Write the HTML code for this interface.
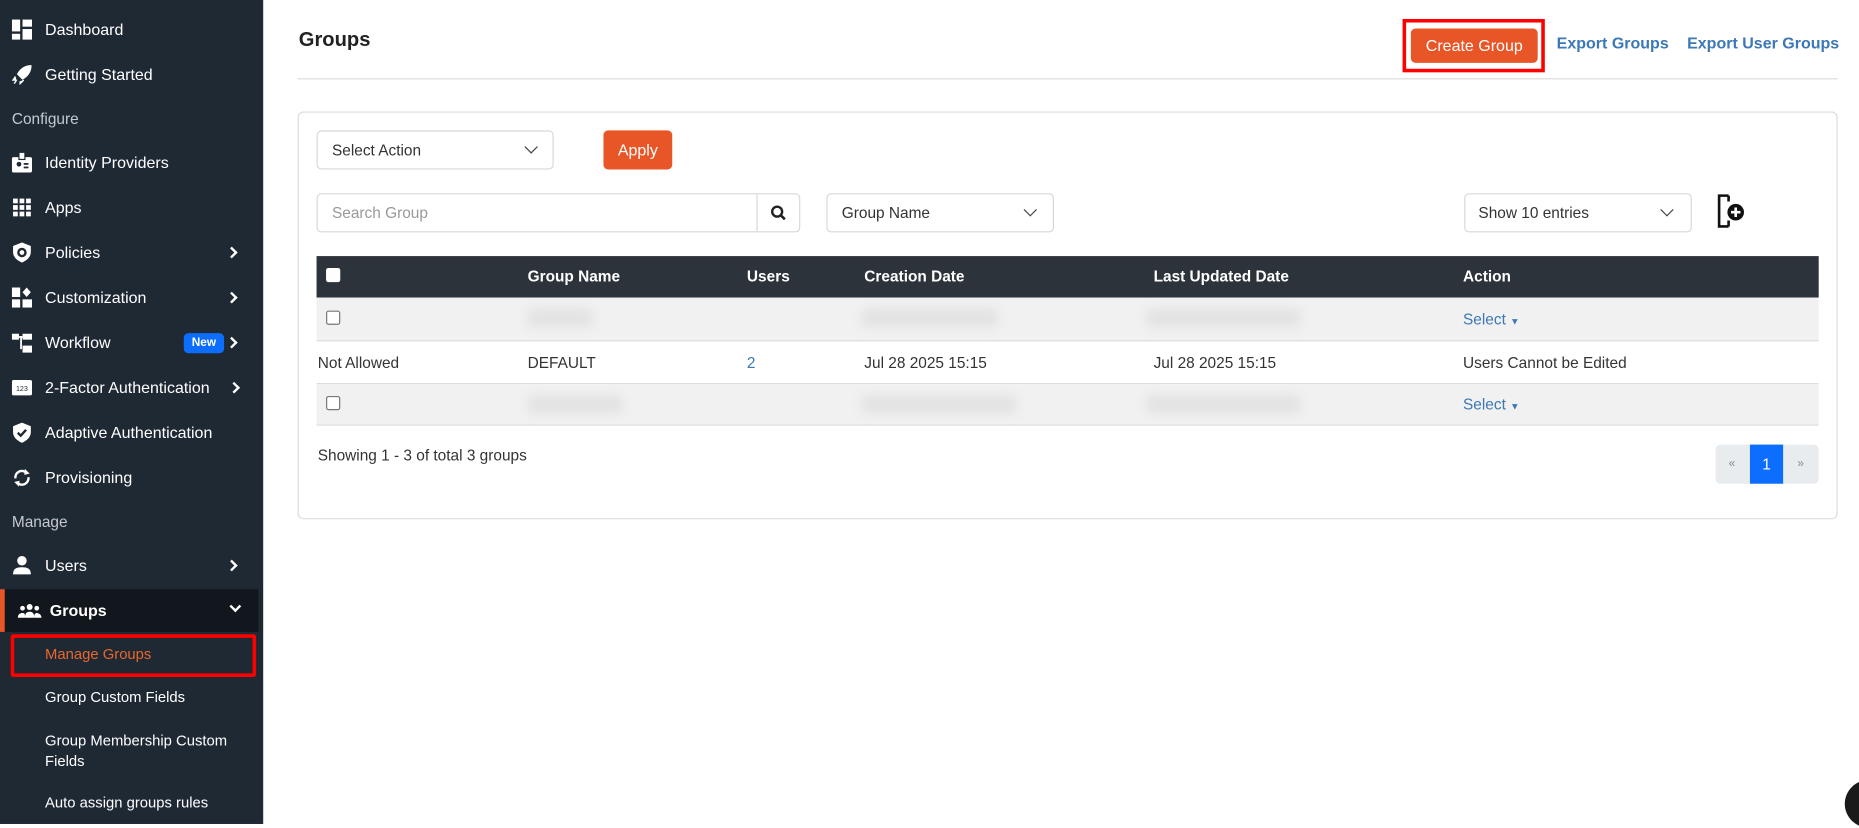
<!DOCTYPE html>
<html><head><meta charset="utf-8"><style>
*{box-sizing:border-box;margin:0;padding:0}
html,body{width:1859px;height:824px;overflow:hidden;background:#fff;font-family:"Liberation Sans",sans-serif}
#w{position:absolute;left:0;top:0;width:1568px;height:695px;transform:scale(1.18559);transform-origin:0 0}
.a{position:absolute;white-space:nowrap}
#sb{position:absolute;left:0;top:0;width:222px;height:695px;background:#1f2934}
.it{position:absolute;left:38px;color:#fff;font-size:13.5px;transform:translateY(-50%)}
.ic{position:absolute;left:10px;width:17px;height:17px;transform:translateY(-50%)}
.sec{position:absolute;left:10px;color:#c4c9cf;font-size:13px;transform:translateY(-50%)}
.chev{position:absolute;left:192px;width:7px;height:7px;border-right:2px solid #fff;border-top:2px solid #fff;transform:translateY(-50%) rotate(45deg)}
.sub{position:absolute;left:38px;color:#fff;font-size:12.5px}
.box{position:absolute;border:1px solid #d5d8dc;border-radius:4px;background:#fff;font-size:13px;color:#333}
.btn{position:absolute;background:#e85628;color:#fff;border-radius:4px;font-size:13.5px;text-align:center}
.th{position:absolute;top:233px;color:#fff;font-weight:bold;font-size:13px;transform:translateY(-50%)}
.td{position:absolute;font-size:13px;color:#333;transform:translateY(-50%)}
.bl{position:absolute;background:#e3e3e3;filter:blur(4px);border-radius:4px;height:16px}
.cb{position:absolute;left:275px;width:12px;height:12px;border:1px solid #777;border-radius:2px;background:#fff}
.sel{position:absolute;left:1234px;color:#3b78b5;font-size:13px;transform:translateY(-50%)}
.dn{position:absolute;width:8px;height:8px;border-right:1.5px solid #444;border-bottom:1.5px solid #444;transform:rotate(45deg)}
</style></head><body><div id="w">
<div id="sb">
<svg class="ic" style="top:25px" viewBox="0 0 17 17"><rect x="0" y="0" width="7" height="10" fill="#fff"/><rect x="9" y="0" width="8" height="6" fill="#fff"/><rect x="0" y="12" width="7" height="5" fill="#fff"/><rect x="9" y="8" width="8" height="9" fill="#fff"/></svg>
<div class="it" style="top:25px">Dashboard</div>
<svg class="ic" style="top:63px" viewBox="0 0 17 17"><path d="M16 1C11 1 7 4 5 8L9 12C13 10 16 6 16 1Z M3 10L1 13 4 13 M7 14L7 16 10 13 M4 13L2 16" fill="#fff" stroke="#fff" stroke-width="1.2"/></svg>
<div class="it" style="top:63px">Getting Started</div>
<div class="sec" style="top:100px">Configure</div>
<svg class="ic" style="top:137px" viewBox="0 0 17 17"><rect x="0" y="4" width="17" height="13" rx="1.5" fill="#fff"/><rect x="6" y="0" width="5" height="6" fill="#fff" stroke="#1f2934"/><circle cx="6" cy="10" r="2" fill="#1f2934"/><rect x="10" y="9" width="4" height="1.5" fill="#1f2934"/><rect x="10" y="12" width="4" height="1.5" fill="#1f2934"/></svg>
<div class="it" style="top:137px">Identity Providers</div>
<svg class="ic" style="top:175px" viewBox="0 0 17 17" fill="#fff"><rect x="1" y="1" width="4" height="4"/><rect x="6.5" y="1" width="4" height="4"/><rect x="12" y="1" width="4" height="4"/><rect x="1" y="6.5" width="4" height="4"/><rect x="6.5" y="6.5" width="4" height="4"/><rect x="12" y="6.5" width="4" height="4"/><rect x="1" y="12" width="4" height="4"/><rect x="6.5" y="12" width="4" height="4"/><rect x="12" y="12" width="4" height="4"/></svg>
<div class="it" style="top:175px">Apps</div>
<svg class="ic" style="top:213px" viewBox="0 0 17 17"><path d="M8.5 0L16 3V8C16 12 13 15 8.5 17C4 15 1 12 1 8V3Z" fill="#fff"/><circle cx="8.5" cy="8.5" r="3" fill="none" stroke="#1f2934" stroke-width="2"/></svg>
<div class="it" style="top:213px">Policies</div><div class="chev" style="top:213px"></div>
<svg class="ic" style="top:251px" viewBox="0 0 17 17" fill="#fff"><rect x="0" y="0" width="7" height="8"/><rect x="0" y="10" width="7" height="7"/><rect x="9" y="10" width="8" height="7"/><path d="M12.5 0L16 4 12.5 8 9 4Z"/></svg>
<div class="it" style="top:251px">Customization</div><div class="chev" style="top:251px"></div>
<svg class="ic" style="top:289px" viewBox="0 0 17 17" fill="#fff"><rect x="0" y="1" width="6" height="5"/><rect x="9" y="1" width="8" height="5"/><rect x="9" y="11" width="8" height="6"/><rect x="6" y="3" width="3" height="1.5"/><rect x="7" y="3" width="1.5" height="11"/></svg>
<div class="it" style="top:289px">Workflow</div>
<div class="a" style="left:155px;top:281px;width:34px;height:17px;background:#0d6efd;border-radius:4px;color:#fff;font-size:10px;font-weight:bold;text-align:center;line-height:17px">New</div>
<div class="chev" style="top:289px"></div>
<svg class="ic" style="top:327px" viewBox="0 0 17 17"><rect x="0" y="2" width="17" height="13" rx="1.5" fill="#fff"/><text x="8.5" y="11.5" font-size="6" text-anchor="middle" fill="#1f2934" font-family="Liberation Sans">123</text></svg>
<div class="it" style="top:327px">2-Factor Authentication</div><div class="chev" style="top:327px;left:194px"></div>
<svg class="ic" style="top:365px" viewBox="0 0 17 17"><path d="M8.5 0L16 3V8C16 12 13 15 8.5 17C4 15 1 12 1 8V3Z" fill="#fff"/><path d="M5 8.5L7.5 11 12 6" fill="none" stroke="#1f2934" stroke-width="2"/></svg>
<div class="it" style="top:365px">Adaptive Authentication</div>
<svg class="ic" style="top:403px" viewBox="0 0 17 17"><path d="M3 9A5.5 5.5 0 0 1 12.5 4.5M14 8A5.5 5.5 0 0 1 4.5 12.5" fill="none" stroke="#fff" stroke-width="2"/><path d="M11 1L15 5 10.5 6Z M6 16L2 12 6.5 11Z" fill="#fff"/></svg>
<div class="it" style="top:403px">Provisioning</div>
<div class="sec" style="top:440px">Manage</div>
<svg class="ic" style="top:477px" viewBox="0 0 17 17" fill="#fff"><circle cx="8.5" cy="4.5" r="4"/><path d="M1 16C1 11 4 10 8.5 10S16 11 16 16Z"/></svg>
<div class="it" style="top:477px">Users</div><div class="chev" style="top:477px"></div>
<div class="a" style="left:0;top:497px;width:218px;height:36px;background:#11171d"></div>
<div class="a" style="left:0;top:497px;width:4px;height:36px;background:#e85628"></div>
<svg class="ic" style="top:515px;left:15px;width:20px" viewBox="0 0 20 14" fill="#fff"><circle cx="10" cy="4" r="2.5"/><circle cx="4" cy="5" r="2"/><circle cx="16" cy="5" r="2"/><path d="M6 13C6 9 8 8 10 8S14 9 14 13Z M0 13C0 10 2 9 4 9S6 10 6 11V13Z M14 13V11C14 10 15 9 16 9S20 10 20 13Z"/></svg>
<div class="it" style="top:515px;left:42px;font-weight:bold">Groups</div>
<div class="a" style="left:195px;top:508px;width:7px;height:7px;border-right:2px solid #fff;border-bottom:2px solid #fff;transform:rotate(45deg)"></div>
<div class="a" style="left:9px;top:535px;width:207px;height:36px;border:3px solid #ff0000;border-radius:2px"></div>
<div class="sub" style="top:545px;color:#e8672e">Manage Groups</div>
<div class="sub" style="top:581px">Group Custom Fields</div>
<div class="sub" style="top:617px;line-height:17px;white-space:normal;width:175px">Group Membership Custom Fields</div>
<div class="sub" style="top:670px">Auto assign groups rules</div>
</div>

<div class="a" style="left:252px;top:24px;font-size:17px;font-weight:bold;color:#222">Groups</div>
<div class="a" style="left:251px;top:66px;width:1299px;height:1px;background:#dcdcdc"></div>
<div class="a" style="left:1183px;top:16px;width:120px;height:45px;border:3px solid #ff0000"></div>
<div class="btn" style="left:1190px;top:24px;width:107px;height:29px;line-height:29px">Create Group</div>
<div class="a" style="left:1313px;top:29px;color:#3b78b5;font-size:13.5px;font-weight:bold">Export Groups</div>
<div class="a" style="left:1423px;top:29px;color:#3b78b5;font-size:13.5px;font-weight:bold">Export User Groups</div>

<div class="a" style="left:251px;top:94px;width:1299px;height:344px;border:1px solid #dcdcdc;border-radius:5px"></div>
<div class="box" style="left:267px;top:110px;width:200px;height:33px;line-height:31px;padding-left:12px">Select Action</div>
<div class="dn" style="left:444px;top:120px"></div>
<div class="btn" style="left:509px;top:110px;width:58px;height:33px;line-height:33px">Apply</div>
<div class="box" style="left:267px;top:163px;width:408px;height:33px;line-height:31px;padding-left:12px;color:#999">Search Group</div>
<div class="a" style="left:638px;top:164px;width:1px;height:31px;background:#d5d8dc"></div>
<svg class="a" style="left:650px;top:173px" width="13" height="13" viewBox="0 0 13 13"><circle cx="5.5" cy="5.5" r="4.2" fill="none" stroke="#222" stroke-width="2"/><path d="M8.5 8.5L12 12" stroke="#222" stroke-width="2.2"/></svg>
<div class="box" style="left:697px;top:163px;width:192px;height:33px;line-height:31px;padding-left:12px">Group Name</div>
<div class="dn" style="left:865px;top:173px"></div>
<div class="box" style="left:1235px;top:163px;width:192px;height:33px;line-height:31px;padding-left:11px">Show 10 entries</div>
<div class="dn" style="left:1402px;top:173px"></div>
<svg class="a" style="left:1447px;top:162px" width="30" height="32" viewBox="0 0 30 32"><path d="M11 3H3V29H11" fill="none" stroke="#111" stroke-width="2.2"/><path d="M11 3V8M11 24V29" stroke="#111" stroke-width="2.2"/><circle cx="17" cy="17" r="7" fill="#111"/><path d="M17 13V21M13 17H21" stroke="#fff" stroke-width="2.2"/></svg>

<div class="a" style="left:267px;top:216px;width:1267px;height:35px;background:#2d333b"></div>
<div class="a" style="left:275px;top:226px;width:12px;height:12px;background:#fff;border-radius:2px"></div>
<div class="th" style="left:445px">Group Name</div>
<div class="th" style="left:630px">Users</div>
<div class="th" style="left:729px">Creation Date</div>
<div class="th" style="left:973px">Last Updated Date</div>
<div class="th" style="left:1234px">Action</div>
<div class="a" style="left:267px;top:251px;width:1267px;height:37px;background:#f1f1f1;border-bottom:1px solid #ddd"></div>
<div class="a" style="left:267px;top:288px;width:1267px;height:36px;background:#fff;border-bottom:1px solid #ddd"></div>
<div class="a" style="left:267px;top:324px;width:1267px;height:35px;background:#f1f1f1;border-bottom:1px solid #ddd"></div>
<div class="cb" style="top:262px"></div>
<div class="cb" style="top:334px"></div>
<div class="bl" style="left:445px;top:260px;width:55px"></div>
<div class="bl" style="left:727px;top:260px;width:115px"></div>
<div class="bl" style="left:967px;top:260px;width:130px"></div>
<div class="bl" style="left:445px;top:333px;width:80px"></div>
<div class="bl" style="left:727px;top:333px;width:130px"></div>
<div class="bl" style="left:967px;top:333px;width:130px"></div>
<div class="sel" style="top:269px">Select <span style="font-size:8px">▼</span></div>
<div class="sel" style="top:341px">Select <span style="font-size:8px">▼</span></div>
<div class="td" style="left:268px;top:306px">Not Allowed</div>
<div class="td" style="left:445px;top:306px">DEFAULT</div>
<div class="td" style="left:630px;top:306px;color:#3b78b5">2</div>
<div class="td" style="left:729px;top:306px">Jul 28 2025 15:15</div>
<div class="td" style="left:973px;top:306px">Jul 28 2025 15:15</div>
<div class="td" style="left:1234px;top:306px">Users Cannot be Edited</div>
<div class="td" style="left:268px;top:384px">Showing 1 - 3 of total 3 groups</div>
<div class="a" style="left:1447px;top:375px;width:87px;height:33px;background:#e9ecef;border-radius:4px"></div>
<div class="a" style="left:1458px;top:375px;line-height:33px;font-size:10px;color:#888">«</div>
<div class="a" style="left:1476px;top:375px;width:28px;height:33px;background:#0d6efd;color:#fff;font-size:13px;text-align:center;line-height:33px">1</div>
<div class="a" style="left:1516px;top:375px;line-height:33px;font-size:10px;color:#888">»</div>
<div class="a" style="left:1556px;top:658px;width:40px;height:40px;border-radius:50%;background:#1a1a1a"></div>
</div></body></html>
